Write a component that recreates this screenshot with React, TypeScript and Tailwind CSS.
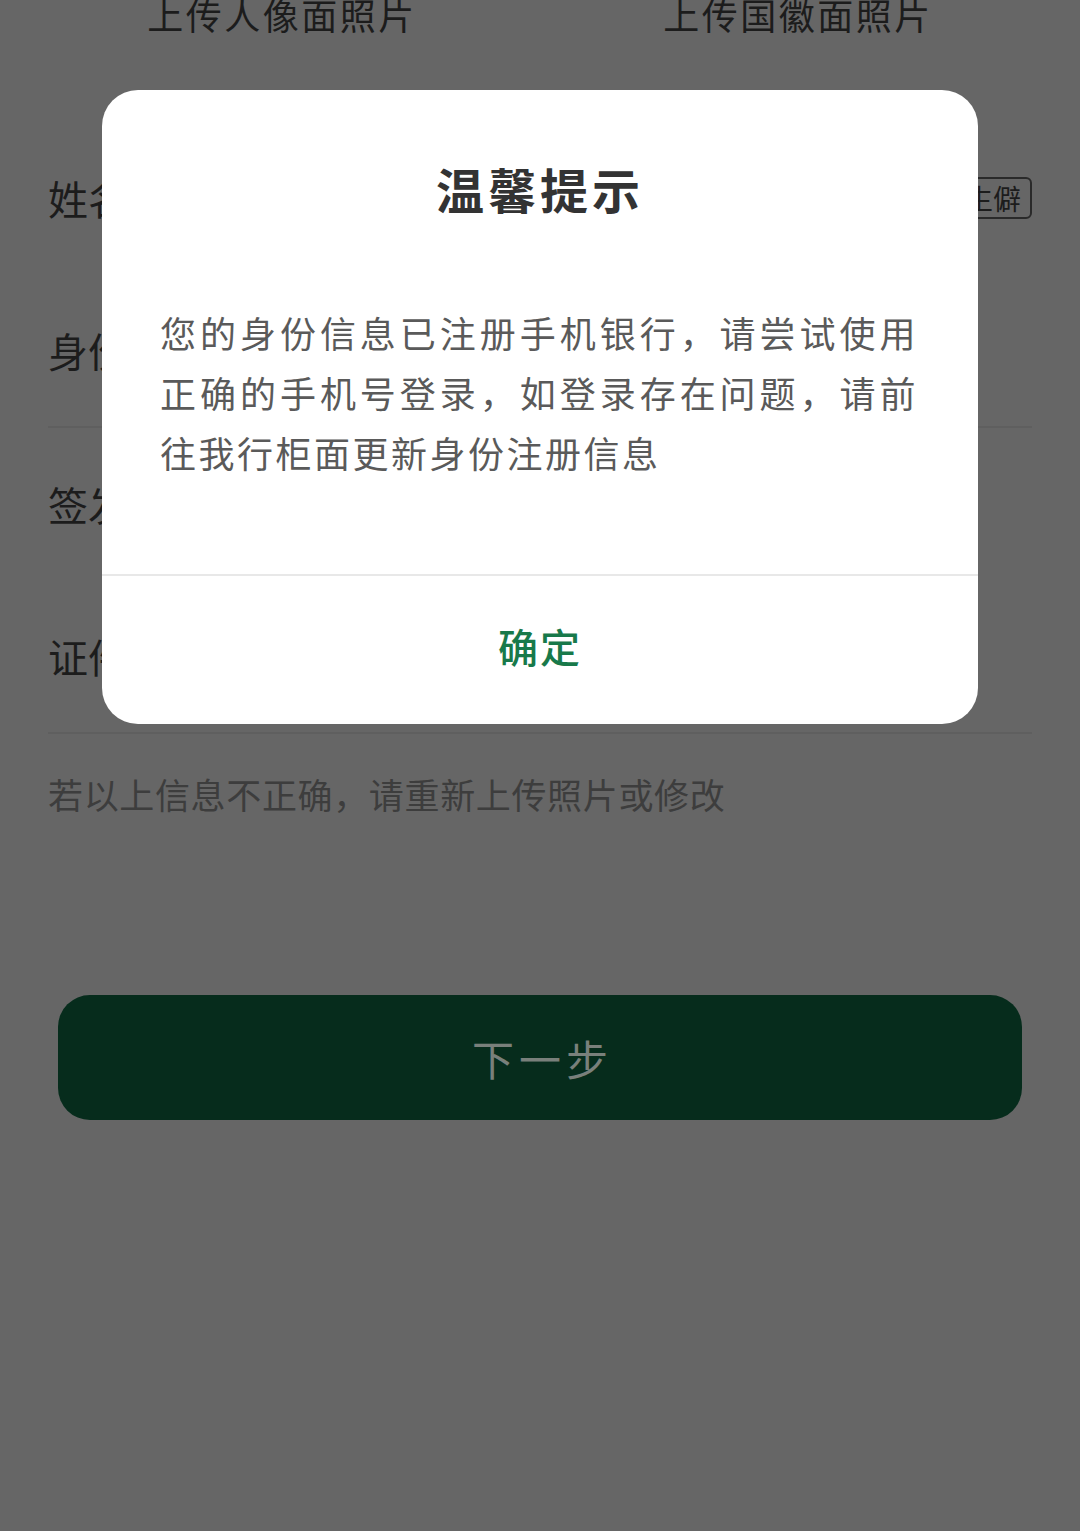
import React from "react";

const font = { fontFamily: '"Noto Sans CJK SC", "Noto Sans", sans-serif' };

const rows = [
  { label: "姓名", tag: true, divider: false },
  { label: "身份证号", tag: false, divider: true },
  { label: "签发机关", tag: false, divider: false },
  { label: "证件有效期", tag: false, divider: true },
];

function FormRow({ label, tag, divider }: { label: string; tag: boolean; divider: boolean }) {
  return (
    <div className={divider ? "border-b-2 border-[#5f5f5f]" : ""}>
      <div className="flex h-[152px] items-center justify-between">
        <span className="text-[40px] leading-none text-[#1c1c1c]">{label}</span>
        {tag && (
          <span className="rounded-md border-2 border-[#2a2a2a] px-[9px] text-[28px] leading-[38px] text-[#1c1c1c]">
            生僻
          </span>
        )}
      </div>
    </div>
  );
}

function Dialog() {
  return (
    <div className="absolute left-[102px] top-[90px] w-[876px] overflow-hidden rounded-[36px] bg-white">
      <h2 className="pt-[68px] text-center text-[48px] font-bold leading-[60px] tracking-[4px] text-[#333333]">
        温馨提示
      </h2>
      <p className="mt-[84px] pl-[58px] pr-[60px] pb-[92px] text-justify text-[36px] leading-[60px] tracking-[2.5px] text-[#5a5a5a]">
        您的身份信息已注册手机银行，请尝试使用正确的手机号登录，如登录存在问题，请前往我行柜面更新身份注册信息
      </p>
      <div className="h-[2px] bg-[#e8e8e8]" />
      <button className="flex h-[148px] w-full items-center justify-center pb-[8px] text-[40px] font-medium tracking-[2px] text-[#18794a]">
        确定
      </button>
    </div>
  );
}

export default function App() {
  return (
    <div className="relative h-[1531px] w-[1080px] overflow-hidden bg-[#666666]" style={font}>
      <div className="-mt-[11px] grid grid-cols-2 px-6">
        <div className="text-center text-[36px] leading-[50px] tracking-[2.5px] text-[#1c1c1c]">上传人像面照片</div>
        <div className="text-center text-[36px] leading-[50px] tracking-[2.5px] text-[#1c1c1c]">上传国徽面照片</div>
      </div>

      <div className="mt-[83px] px-12">
        {rows.map((r) => (
          <FormRow key={r.label} {...r} />
        ))}
        <p className="mt-[35px] text-[35px] leading-[50px] tracking-[0.65px] text-[#3d3d3d]">
          若以上信息不正确，请重新上传照片或修改
        </p>
      </div>

      <div className="mx-[58px] mt-[176px]">
        <button className="flex h-[125px] w-full items-center justify-center rounded-[32px] bg-[#062c1c] pl-[5px] text-[42px] tracking-[5px] text-[#79807b]">
          下一步
        </button>
      </div>

      <Dialog />
    </div>
  );
}
